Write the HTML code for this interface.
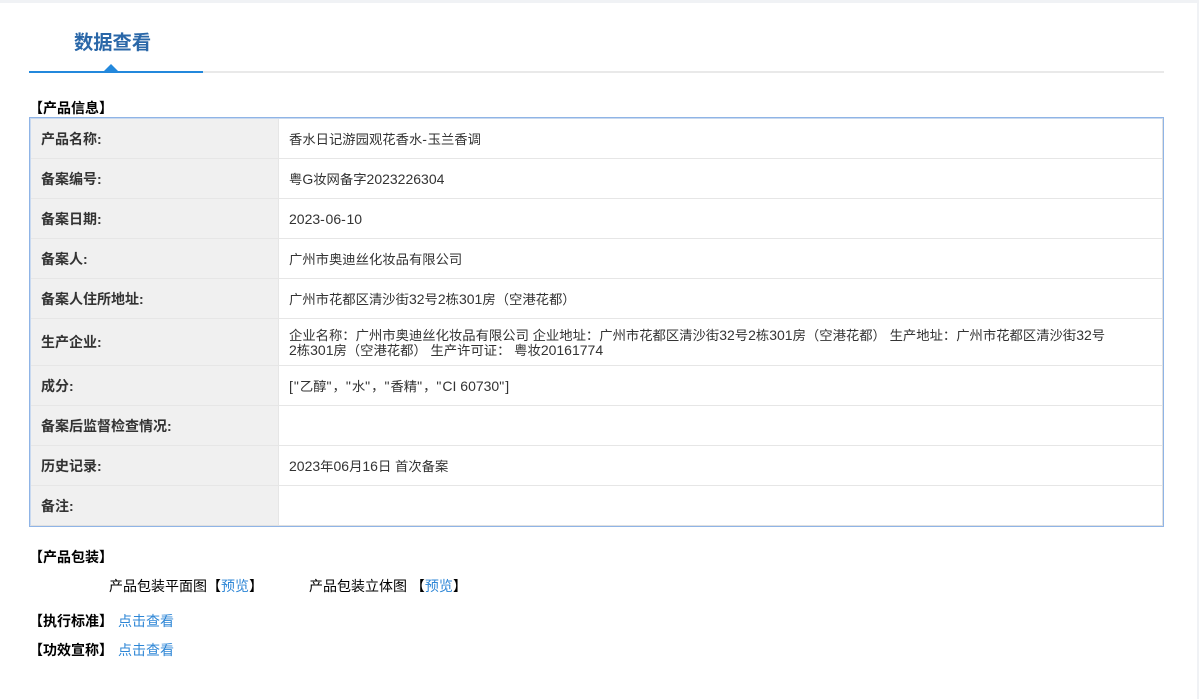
<!DOCTYPE html>
<html lang="zh"><head><meta charset="utf-8"><style>
html,body{margin:0;padding:0;width:1199px;height:699px;overflow:hidden;background:#f0f2f5}
body{position:relative;font-family:"Liberation Sans","Noto Sans CJK SC",sans-serif;font-size:13.33px;color:#000}
#page{position:absolute;left:0;top:3px;width:1197px;height:696px;background:#fff}
.a{position:absolute;white-space:nowrap}
.title{left:74px;top:30px;font-size:19.3px;line-height:28px;font-weight:bold;color:#2a67a8}
.l1{position:absolute;left:29px;top:71px;width:1135px;height:2px;background:#e9e9e9}
.l2{position:absolute;left:29px;top:71px;width:174px;height:2px;background:#2388dc}
.tri{position:absolute;left:104px;top:64px;width:0;height:0;border-left:7px solid transparent;border-right:7px solid transparent;border-bottom:7px solid #2388dc}
.h{font-weight:bold;font-size:14px;line-height:18px;color:#000}
#t{position:absolute;left:29px;top:117px;width:1135px;height:410px;border:1px solid #8fb4e6;box-sizing:border-box}
#i{position:absolute;left:0;top:0;right:0;bottom:0;border:1px solid #e0e0e0;border-top-color:#c9d9ef;border-left-color:#c9d9ef}
.r{position:absolute;left:0;width:1131px;border-bottom:1px solid #e6e6e6;box-sizing:border-box}
.kb{position:absolute;left:0;top:0;bottom:0;width:247px;background:#f0f0f0;border-right:1px solid #e6e6e6}
.k2{position:absolute;left:10px;top:0;bottom:0;font-weight:bold;font-size:14px;color:#333;display:flex;align-items:center;white-space:nowrap}
.v{position:absolute;left:258px;right:50px;top:1px;bottom:-1px;display:flex;align-items:center;color:#333;line-height:14px}
.n{font-size:14px;line-height:14px}
.d{font-size:14px;line-height:14px;letter-spacing:.7px}
.q{font-size:14px;line-height:14px;letter-spacing:1px}
a{color:#2d86d6;text-decoration:none}
.p{font-size:14px;line-height:18px}
</style></head><body>
<div id="page"></div>
<div class="a title">数据查看</div>
<div class="l1"></div><div class="l2"></div><div class="tri"></div>
<div class="a h" style="left:29px;top:99px">【产品信息】</div>
<div id="t"><div id="i">
<div class="r" style="top:0;height:40px"><div class="kb"></div><div class="k2">产品名称:</div><div class="v"><div>香水日记游园观花香水<span class="d">-</span>玉兰香调</div></div></div>
<div class="r" style="top:40px;height:40px"><div class="kb"></div><div class="k2">备案编号:</div><div class="v"><div>粤<span class="n">G</span>妆网备字<span class="n">2023226304</span></div></div></div>
<div class="r" style="top:80px;height:40px"><div class="kb"></div><div class="k2">备案日期:</div><div class="v"><div><span class="n">2023<span class="d">-</span>06<span class="d">-</span>10</span></div></div></div>
<div class="r" style="top:120px;height:40px"><div class="kb"></div><div class="k2">备案人:</div><div class="v"><div>广州市奥迪丝化妆品有限公司</div></div></div>
<div class="r" style="top:160px;height:40px"><div class="kb"></div><div class="k2">备案人住所地址:</div><div class="v"><div>广州市花都区清沙街<span class="n">32</span>号<span class="n">2</span>栋<span class="n">301</span>房（空港花都）</div></div></div>
<div class="r" style="top:200px;height:47px"><div class="kb"></div><div class="k2">生产企业:</div><div class="v"><div>企业名称：广州市奥迪丝化妆品有限公司 企业地址：广州市花都区清沙街<span class="n">32</span>号<span class="n">2</span>栋<span class="n">301</span>房（空港花都） 生产地址：广州市花都区清沙街<span class="n">32</span>号<br><span class="n">2</span>栋<span class="n">301</span>房（空港花都） 生产许可证： 粤妆<span class="n">20161774</span></div></div></div>
<div class="r" style="top:247px;height:40px"><div class="kb"></div><div class="k2">成分:</div><div class="v"><div><span class="q">["</span>乙醇<span class="q">"</span>，<span class="q">"</span>水<span class="q">"</span>，<span class="q">"</span>香精<span class="q">"</span>，<span class="q">"</span><span class="n">CI 60730</span><span class="q">"]</span></div></div></div>
<div class="r" style="top:287px;height:40px"><div class="kb"></div><div class="k2">备案后监督检查情况:</div></div>
<div class="r" style="top:327px;height:40px"><div class="kb"></div><div class="k2">历史记录:</div><div class="v"><div><span class="n">2023</span>年<span class="n">06</span>月<span class="n">16</span>日 首次备案</div></div></div>
<div class="r" style="top:367px;height:39px;border-bottom:0"><div class="kb"></div><div class="k2">备注:</div></div>
</div></div>
<div class="a h" style="left:29px;top:548px">【产品包装】</div>
<div class="a p" style="left:109px;top:577px">产品包装平面图【<a href="#">预览</a>】</div>
<div class="a p" style="left:309px;top:577px">产品包装立体图 【<a href="#">预览</a>】</div>
<div class="a h" style="left:29px;top:612px">【执行标准】</div>
<a class="a p" href="#" style="left:118px;top:612px">点击查看</a>
<div class="a h" style="left:29px;top:641px">【功效宣称】</div>
<a class="a p" href="#" style="left:118px;top:641px">点击查看</a>
</body></html>
